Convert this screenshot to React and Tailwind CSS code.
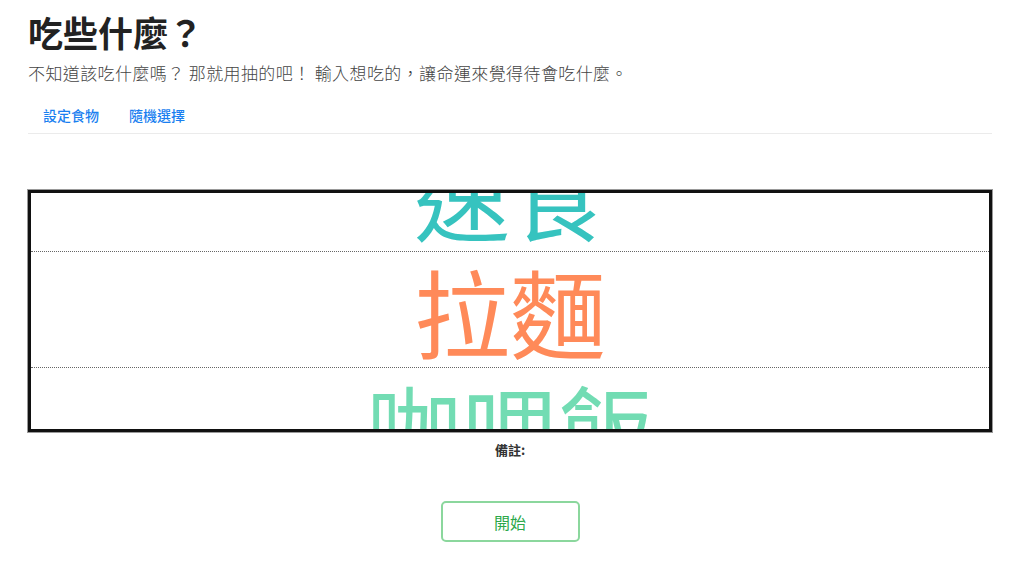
import { useState } from "react";

const foods = [
  { name: "速食", color: "text-[#36c3bf]" },
  { name: "拉麵", color: "text-[#ff8a59]" },
  { name: "咖哩飯", color: "text-[#72dcb3]" },
];

const App = () => {
  const [tab, setTab] = useState(1);

  return (
    <div
      className="min-h-[570px] bg-white pl-[28px] pr-[32px] pt-[8px] text-[#222]"
      style={{ fontFamily: '"Noto Sans CJK TC", "Noto Sans", sans-serif' }}
    >
      <h1 className="text-[35px] font-semibold leading-[48px] text-[#222]">吃些什麼？</h1>
      <p className="mt-[4px] text-[17px] font-light leading-[26px] tracking-[0.4px] text-[#444]">
        不知道該吃什麼嗎？ 那就用抽的吧！ 輸入想吃的，讓命運來覺得待會吃什麼。
      </p>

      {/* tabs */}
      <div className="mt-[17px] flex border-b border-[#ebebeb]">
        {["設定食物", "隨機選擇"].map((t, i) => (
          <button
            key={t}
            onClick={() => setTab(i)}
            className="px-[15px] pb-[8px] pt-[2px] text-[14px] font-medium leading-[20px] text-[#1a7ff0]"
          >
            {t}
          </button>
        ))}
      </div>

      {/* slot box */}
      <div className="mt-[56px] h-[242px] overflow-hidden border-[3px] border-[#111] outline outline-1 outline-[#999]">
        <div className="-mt-[58px] flex flex-col">
          {foods.map((f, i) => (
            <div
              key={f.name}
              className={`flex h-[116px] items-center justify-center ${i > 0 ? "border-t border-dotted border-[#666]" : ""}`}
            >
              <span className={`text-[96px] font-normal leading-none ${f.color}`}>{f.name}</span>
            </div>
          ))}
        </div>
      </div>

      <p className="mt-[8px] text-center text-[13px] font-bold leading-[20px] text-[#333]">備註:</p>

      <div className="mt-[41px] flex justify-center">
        <button className="h-[41px] w-[139px] rounded-[5px] border-2 border-[#8bd79d] bg-white text-[16px] text-[#2ca84a]">
          開始
        </button>
      </div>
    </div>
  );
};

export default App;
